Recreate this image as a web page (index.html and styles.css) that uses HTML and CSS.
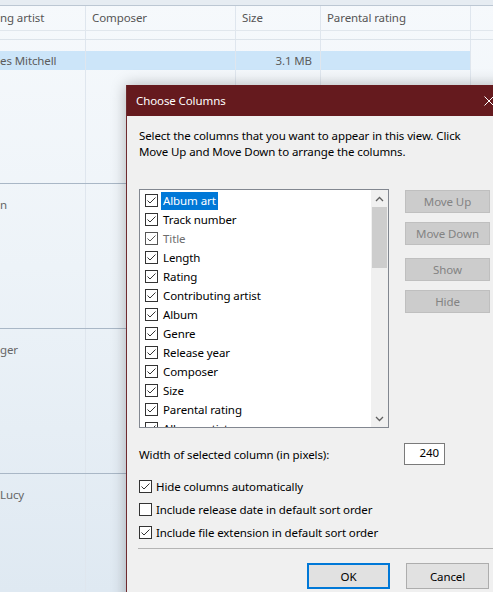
FILE: index.html
```html
<!DOCTYPE html>
<html>
<head>
<meta charset="utf-8">
<title>Choose Columns</title>
<link rel="stylesheet" href="styles.css">
</head>
<body>
<div class="screen">
  <div class="lv">
    <div class="lv-top"></div>
    <div class="lv-row lv-head">
      <div class="c">ng artist</div><div class="c">Composer</div><div class="c">Size</div><div class="c">Parental rating</div><div class="c"></div>
    </div>
    <div class="lv-row lv-sub">
      <div class="c"></div><div class="c"></div><div class="c"></div><div class="c"></div><div class="c"></div>
    </div>
    <div class="lv-row lv-gap">
      <div class="c"></div><div class="c"></div><div class="c"></div><div class="c"></div><div class="c"></div>
    </div>
    <div class="lv-row lv-sel">
      <div class="c">es Mitchell</div><div class="c"></div><div class="c num">3.1 MB</div><div class="c"></div><div class="c"></div>
    </div>
    <div class="lv-row lv-fill">
      <div class="c"></div><div class="c"></div><div class="c"></div><div class="c"></div><div class="c"></div>
    </div>
    <div class="lv-row lv-group">
      <div class="c">n</div><div class="c"></div><div class="c"></div><div class="c"></div><div class="c"></div>
    </div>
    <div class="lv-row lv-group">
      <div class="c">ger</div><div class="c"></div><div class="c"></div><div class="c"></div><div class="c"></div>
    </div>
    <div class="lv-row lv-group">
      <div class="c">Lucy</div><div class="c"></div><div class="c"></div><div class="c"></div><div class="c"></div>
    </div>
  </div>

  <div class="dialog">
    <div class="titlebar">
      <span class="title">Choose Columns</span>
      <span class="close"><svg width="10" height="10" viewBox="0 0 10 10"><path d="M0.5 0.5 L9.5 9.5 M9.5 0.5 L0.5 9.5" stroke="#fff" stroke-width="1" fill="none"/></svg></span>
    </div>
    <div class="dbody">
      <p class="intro">Select the columns that you want to appear in this view. Click<br>Move Up and Move Down to arrange the columns.</p>
      <div class="main">
        <div class="list">
          <div class="items">
            <div class="item"><span class="cb"><svg width="11" height="11" viewBox="0 0 11 11"><path d="M1.5 5.5 L4 8 L9.5 2.5" stroke="#333" stroke-width="1" fill="none"/></svg></span><span class="lbl sel">Album art</span></div>
            <div class="item"><span class="cb"><svg width="11" height="11" viewBox="0 0 11 11"><path d="M1.5 5.5 L4 8 L9.5 2.5" stroke="#333" stroke-width="1" fill="none"/></svg></span><span class="lbl">Track number</span></div>
            <div class="item"><span class="cb dim"><svg width="11" height="11" viewBox="0 0 11 11"><path d="M1.5 5.5 L4 8 L9.5 2.5" stroke="#555" stroke-width="1" fill="none"/></svg></span><span class="lbl dis">Title</span></div>
            <div class="item"><span class="cb"><svg width="11" height="11" viewBox="0 0 11 11"><path d="M1.5 5.5 L4 8 L9.5 2.5" stroke="#333" stroke-width="1" fill="none"/></svg></span><span class="lbl">Length</span></div>
            <div class="item"><span class="cb"><svg width="11" height="11" viewBox="0 0 11 11"><path d="M1.5 5.5 L4 8 L9.5 2.5" stroke="#333" stroke-width="1" fill="none"/></svg></span><span class="lbl">Rating</span></div>
            <div class="item"><span class="cb"><svg width="11" height="11" viewBox="0 0 11 11"><path d="M1.5 5.5 L4 8 L9.5 2.5" stroke="#333" stroke-width="1" fill="none"/></svg></span><span class="lbl">Contributing artist</span></div>
            <div class="item"><span class="cb"><svg width="11" height="11" viewBox="0 0 11 11"><path d="M1.5 5.5 L4 8 L9.5 2.5" stroke="#333" stroke-width="1" fill="none"/></svg></span><span class="lbl">Album</span></div>
            <div class="item"><span class="cb"><svg width="11" height="11" viewBox="0 0 11 11"><path d="M1.5 5.5 L4 8 L9.5 2.5" stroke="#333" stroke-width="1" fill="none"/></svg></span><span class="lbl">Genre</span></div>
            <div class="item"><span class="cb"><svg width="11" height="11" viewBox="0 0 11 11"><path d="M1.5 5.5 L4 8 L9.5 2.5" stroke="#333" stroke-width="1" fill="none"/></svg></span><span class="lbl">Release year</span></div>
            <div class="item"><span class="cb"><svg width="11" height="11" viewBox="0 0 11 11"><path d="M1.5 5.5 L4 8 L9.5 2.5" stroke="#333" stroke-width="1" fill="none"/></svg></span><span class="lbl">Composer</span></div>
            <div class="item"><span class="cb"><svg width="11" height="11" viewBox="0 0 11 11"><path d="M1.5 5.5 L4 8 L9.5 2.5" stroke="#333" stroke-width="1" fill="none"/></svg></span><span class="lbl">Size</span></div>
            <div class="item"><span class="cb"><svg width="11" height="11" viewBox="0 0 11 11"><path d="M1.5 5.5 L4 8 L9.5 2.5" stroke="#333" stroke-width="1" fill="none"/></svg></span><span class="lbl">Parental rating</span></div>
            <div class="item"><span class="cb"><svg width="11" height="11" viewBox="0 0 11 11"><path d="M1.5 5.5 L4 8 L9.5 2.5" stroke="#333" stroke-width="1" fill="none"/></svg></span><span class="lbl">Album artist</span></div>
          </div>
          <div class="scroll">
            <div class="sbtn"><svg width="9" height="6" viewBox="0 0 9 6"><path d="M1 5 L4.5 1.5 L8 5" stroke="#606060" stroke-width="1.3" fill="none"/></svg></div>
            <div class="thumb"></div>
            <div class="spacer"></div>
            <div class="sbtn"><svg width="9" height="6" viewBox="0 0 9 6"><path d="M1 1 L4.5 4.5 L8 1" stroke="#606060" stroke-width="1.3" fill="none"/></svg></div>
          </div>
        </div>
        <div class="side">
          <div class="btn b-up">Move Up</div>
          <div class="btn b-down">Move Down</div>
          <div class="btn b-show">Show</div>
          <div class="btn b-hide">Hide</div>
        </div>
      </div>
      <div class="width-row">
        <span>Width of selected column (in pixels):</span>
        <span class="input">240</span>
      </div>
      <div class="checks">
        <div class="chk"><span class="cb"><svg width="11" height="11" viewBox="0 0 11 11"><path d="M1.5 5.5 L4 8 L9.5 2.5" stroke="#333" stroke-width="1" fill="none"/></svg></span><span class="clbl">Hide columns automatically</span></div>
        <div class="chk"><span class="cb"></span><span class="clbl">Include release date in default sort order</span></div>
        <div class="chk"><span class="cb"><svg width="11" height="11" viewBox="0 0 11 11"><path d="M1.5 5.5 L4 8 L9.5 2.5" stroke="#333" stroke-width="1" fill="none"/></svg></span><span class="clbl">Include file extension in default sort order</span></div>
      </div>
      <div class="sep"></div>
      <div class="footer">
        <div class="pbtn default">OK</div>
        <div class="pbtn">Cancel</div>
      </div>
    </div>
  </div>
</div>
</body>
</html>
```

FILE: styles.css
```css
html, body {
  margin: 0;
  padding: 0;
}
body {
  width: 493px;
  height: 592px;
  overflow: hidden;
  font-family: "Noto Sans", "Open Sans", "DejaVu Sans", sans-serif;
  font-size: 11.5px;
  letter-spacing: -0.1px;
}
.screen {
  position: relative;
  width: 493px;
  height: 592px;
  overflow: hidden;
  background: linear-gradient(180deg, #f6f9fc 0%, #edf3f8 45%, #dfe9f2 100%);
}

/* background list view */
.lv-top {
  height: 5px;
  background: #e6ecf2;
  border-bottom: 1px solid #bcc7d3;
}
.lv-row {
  display: grid;
  grid-template-columns: 86px 150px 85px 150px 1fr;
}
.c {
  box-sizing: border-box;
  border-right: 1px solid #dfe6ee;
  padding-left: 6px;
  white-space: nowrap;
  overflow: hidden;
  color: #666;
}
.c:first-child { padding-left: 0; }
.c:last-child { border-right: none; }
.lv-head {
  height: 24px;
  line-height: 24px;
  border-bottom: 1px solid #e1e7ed;
}
.lv-head .c { color: #555; }
.lv-sub {
  height: 8px;
  border-bottom: 1px solid #dce3ea;
}
.lv-gap { height: 11px; }
.lv-sel {
  height: 19px;
  line-height: 19px;
}
.lv-sel .c { background: #cce5f9; color: #5c5c5c; }
.lv-sel .c:last-child { background: none; }
.num {
  text-align: right;
  padding-right: 8px;
}
.lv-fill {
  height: 113px;
  border-bottom: 1px solid #a9b7c6;
}
.lv-group {
  height: 144px;
  border-bottom: 1px solid #a9b7c6;
}
.lv-group .c {
  padding-top: 13px;
  line-height: 16px;
}

/* dialog */
.dialog {
  position: absolute;
  left: 126px;
  top: 85px;
  width: 386px;
  height: 540px;
  box-sizing: border-box;
  background: #f0f0f0;
  border-left: 1px solid #6e2a2e;
  box-shadow: 0 0 14px rgba(0, 0, 0, 0.28);
  color: #000;
}
.titlebar {
  height: 31px;
  background: #651a1e;
  display: flex;
  align-items: center;
  justify-content: space-between;
  color: #fff;
}
.title { padding-left: 9px; }
.close {
  width: 46px;
  height: 31px;
  display: flex;
  align-items: center;
  justify-content: center;
}
.dbody {
  padding: 12px 0 0 12px;
}
.intro {
  margin: 0;
  line-height: 16px;
}
.main {
  display: flex;
  margin-top: 29px;
}
.list {
  width: 250px;
  height: 239px;
  box-sizing: border-box;
  border: 1px solid #828790;
  background: #fff;
  display: flex;
}
.items {
  flex: 1;
  padding-top: 1px;
  overflow: hidden;
}
.item {
  height: 19px;
  display: flex;
  align-items: center;
  padding-left: 5px;
  white-space: nowrap;
}
.cb {
  width: 13px;
  height: 13px;
  box-sizing: border-box;
  border: 1px solid #333;
  background: #fff;
  display: flex;
  align-items: center;
  justify-content: center;
  flex: none;
}
.cb svg { display: block; }
.cb.dim { border-color: #555; }
.lbl {
  margin-left: 3px;
  padding: 0 2px;
  line-height: 18px;
}
.lbl.sel {
  background: #0078d7;
  color: #fff;
}
.lbl.dis { color: #6d6d6d; }
.scroll {
  width: 17px;
  background: #f0f0f0;
  display: flex;
  flex-direction: column;
}
.sbtn {
  height: 17px;
  display: flex;
  align-items: center;
  justify-content: center;
}
.thumb {
  height: 61px;
  background: #cdcdcd;
  margin: 0 1px;
}
.spacer { flex: 1; }
.side {
  margin-left: 16px;
  width: 85px;
  display: flex;
  flex-direction: column;
}
.btn {
  height: 23px;
  box-sizing: border-box;
  border: 1px solid #bfbfbf;
  background: #cccccc;
  color: #838383;
  display: flex;
  align-items: center;
  justify-content: center;
}
.b-up { margin-top: 1px; }
.b-down { margin-top: 9px; }
.b-show { margin-top: 13px; }
.b-hide { margin-top: 9px; }
.width-row {
  margin-top: 15px;
  width: 306px;
  display: flex;
  align-items: center;
  justify-content: space-between;
}
.input {
  width: 41px;
  height: 22px;
  box-sizing: border-box;
  border: 1px solid #7a7a7a;
  background: #fff;
  text-align: right;
  padding-right: 5px;
  line-height: 18px;
}
.checks { margin-top: 10px; }
.chk {
  height: 23px;
  display: flex;
  align-items: center;
}
.clbl { margin-left: 4px; }
.sep {
  margin-top: 4px;
  margin-left: -1px;
  border-top: 1px solid #b4b4b4;
}
.footer {
  margin-top: 14px;
  width: 350px;
  display: flex;
  justify-content: flex-end;
  gap: 16px;
}
.pbtn {
  width: 83px;
  height: 26px;
  box-sizing: border-box;
  background: #e1e1e1;
  border: 1px solid #adadad;
  display: flex;
  align-items: center;
  justify-content: center;
}
.pbtn.default { border: 2px solid #0078d7; }
```
